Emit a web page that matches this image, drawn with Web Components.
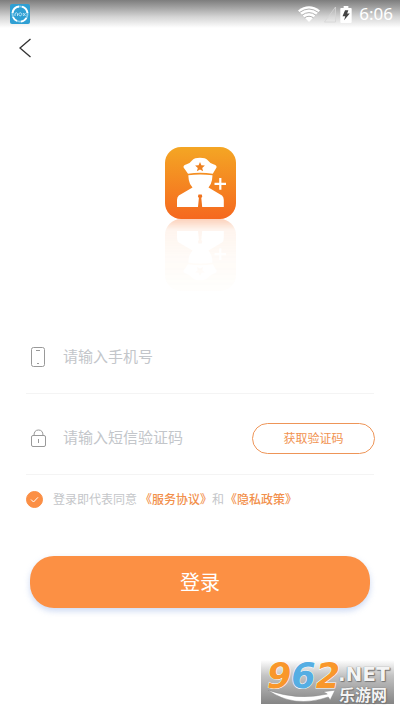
<!DOCTYPE html>
<html lang="zh-CN">
<head>
<meta charset="utf-8">
<meta name="viewport" content="width=device-width, initial-scale=1">
<title>登录</title>
<style>
  body { margin: 0; background: #fff; font-family: "Noto Sans CJK SC", sans-serif; }
</style>
</head>
<body>
<login-page></login-page>

<script>
const define = (name, html, setup) => customElements.define(name, class extends HTMLElement {
  constructor() {
    super();
    const t = document.createElement('template');
    t.innerHTML = html;
    this.attachShadow({ mode: 'open' }).append(t.content.cloneNode(true));
    if (setup) setup(this, this.shadowRoot);
  }
});

define('status-bar', `
<style>
  :host { display: flex; align-items: center; box-sizing: border-box; height: 28px; padding: 0 7px 0 10px;
    background: linear-gradient(#7d7d7d, #a0a0a0 25%, #d4d4d4 60%, #fff); color: #fff;
    font: 17px/28px "Noto Sans", sans-serif; }
  .right { margin-left: auto; display: flex; align-items: center; gap: 4px; }
  time { padding-left: 3px; }
  svg { display: block; }
</style>
<svg width="20" height="20" viewBox="0 0 20 20" role="img" aria-label="nox">
  <rect width="20" height="20" rx="2" fill="#2f9fd3"/>
  <circle cx="10" cy="10" r="7.6" fill="none" stroke="#86cdec" stroke-width="1.8"/>
  <path d="M2.5 9A7.6 7.6 0 0 1 9 2.5M12 2.7A7.6 7.6 0 0 1 17.5 9M16.5 13.9A7.6 7.6 0 0 1 11 17.6M7 17A7.6 7.6 0 0 1 3 13" fill="none" stroke="#fff" stroke-width="1.8"/>
  <path d="M5 12V9.5Q6.6 8 7.5 9.5V12M10.3 8.8a1.5 1.5 0 1 0 .01 0M13 9l2.5 3M15.5 9L13 12" fill="none" stroke="#c5e9f8" stroke-width=".9"/>
</svg>
<div class="right">
  <svg width="22" height="16" viewBox="0 0 22 16">
    <path d="M0 4.500Q11-3.800 22 4.500L11 16Z" fill="#fff"/>
    <path d="M1.500 6.500Q11-.5 20.500 6.500M4 9.200Q11 4 18 9.200M6.500 11.800Q11 8.700 15.500 11.800" fill="none" stroke="#b0b0b0" stroke-width="1"/>
  </svg>
  <svg width="12" height="17" viewBox="0 0 12 17"><path d="M.5 16L11.500 1V16Z" fill="#fff" fill-opacity=".1" stroke="#d4d4d4" stroke-width=".8"/></svg>
  <svg width="12" height="17" viewBox="0 0 12 18">
    <path d="M3.500 0H8.500V2H11Q12 2 12 3V17Q12 18 11 18H1Q0 18 0 17V3Q0 2 1 2H3.500Z" fill="#fff"/>
    <path d="M5 4.500H8.500L7.200 8H10L4 15L5.200 10.800H2.300Z" fill="#444"/>
  </svg>
  <time>6:06</time>
</div>`);

define('back-button', `
<style>
  :host { display: block; padding: 8px 12px; }
  button { display: grid; place-items: center; width: 26px; height: 24px; padding: 0; border: 0; background: none; }
</style>
<button type="button" aria-label="返回">
  <svg width="14" height="20" viewBox="0 0 14 20"><path d="M12.500 1L2 10L12.500 19" fill="none" stroke="#333" stroke-width="1.300"/></svg>
</button>`);

define('app-logo', `
<style>
  :host { display: flex; flex-direction: column; align-items: center; padding-top: 79px; }
  svg { display: block; }
  .mirror { transform: scaleY(-1); opacity: .3;
    -webkit-mask-image: linear-gradient(rgba(0,0,0,.04), rgba(0,0,0,.12) 50%, rgba(0,0,0,.25) 85%, #000);
    mask-image: linear-gradient(rgba(0,0,0,.04), rgba(0,0,0,.12) 50%, rgba(0,0,0,.25) 85%, #000); }
</style>
<div class="main"></div><div class="mirror" aria-hidden="true"></div>`, (host, root) => {
  const art = `<svg width="72" height="72" viewBox="0 0 72 72">
    <defs><linearGradient id="g" x1="0" y1="0" x2="0" y2="1"><stop offset="0" stop-color="#f4a624"/><stop offset="1" stop-color="#f5681f"/></linearGradient></defs>
    <rect x="1" width="71" height="72" rx="16" fill="url(#g)"/>
    <g fill="#fff">
      <path d="M19.600 20.500Q19 18.500 22 17.500Q26.500 16 28.500 13Q30.500 10.700 36 10.700Q41.500 10.700 43.500 13Q45.500 16 50 17.500Q53 18.500 52.500 20.500L48.800 26.800Q36 24.800 24 26.800Z"/>
      <path d="M24.300 28.300Q36 26.800 48.500 28.300L48 33Q47.500 36.500 44.500 40.500L58 48.500Q59.800 50 59.800 53V60H13V53Q13 50 14.800 48.500L28.500 40.500Q25.200 36.500 24.800 33Z"/>
      <path d="M55.200 31H57.400V35.800H62V38H57.400V42.800H55.200V38H50.500V35.800H55.200Z"/>
    </g>
    <path d="M36 15L37.400 18.300L40.900 18.600L38.200 20.900L39.100 24.300L36 22.500L32.900 24.300L33.800 20.900L31.100 18.600L34.600 18.300Z" fill="#ee8120"/>
    <path d="M34.500 47.500H37.700L38.300 49.500L37.300 51L38.200 60H34L34.900 51L33.900 49.500Z" fill="#f0741f"/>
  </svg>`;
  root.querySelector('.main').innerHTML = art;
  root.querySelector('.mirror').innerHTML = art;
});

define('form-field', `
<style>
  :host { display: flex; align-items: center; height: 72px; border-bottom: 1px solid #f4f4f4; }
  label { flex: none; width: 24px; display: grid; place-items: center; }
  input { flex: 1; min-width: 0; margin: 0 8px 2px 13px; padding: 0; border: 0; outline: 0; background: none;
    font: 15px/24px "Noto Sans CJK SC", sans-serif; color: #333; }
  input::placeholder { color: #c3c6ca; opacity: 1; }
</style>
<label for="f"><slot name="icon"></slot></label>
<input id="f">
<slot></slot>`, (host, root) => {
  const i = root.querySelector('input');
  i.placeholder = host.getAttribute('placeholder');
  i.setAttribute('aria-label', i.placeholder);
  i.inputMode = 'numeric';
});

define('code-button', `
<style>
  :host { display: block; margin-right: -1px; }
  button { display: block; box-sizing: border-box; width: 123px; height: 31px; padding: 0; border: 1px solid #ee9558; border-radius: 16px;
    background: #fff; color: #f1924f; font: 12px/28px "Noto Sans CJK SC", sans-serif; }
</style>
<button type="button"><slot></slot></button>`);

define('terms-check', `
<style>
  :host { display: flex; align-items: center; gap: 10px; padding-top: 14px; font-size: 12px; line-height: 20px; color: #c4c6c9; }
  input { appearance: none; flex: none; width: 17px; height: 17px; margin: 0; border: 1px solid #fb8f45; border-radius: 50%; }
  input:checked { background: #fb8f45 url("data:image/svg+xml,%3Csvg xmlns='http://www.w3.org/2000/svg' viewBox='0 0 15 15'%3E%3Cpath d='M4 7.500L6.500 10L11 5.300' fill='none' stroke='white'/%3E%3C/svg%3E"); }
  a { color: #f2904c; font-weight: 500; text-decoration: none; }
  label { margin-right: 3px; }
  .and { margin-right: 1px; }
  div { display: flex; white-space: nowrap; }
</style>
<input type="checkbox" id="c" checked>
<div><label for="c">登录即代表同意</label><a href="#service">《服务协议》</a><span class="and">和</span><a href="#privacy">《隐私政策》</a></div>`);

define('login-button', `
<style>
  :host { display: block; margin: 47px 4px 0; }
  button { display: block; width: 100%; height: 52px; padding: 0; border: 0; border-radius: 24px; background: #fc9044;
    box-shadow: 0 3px 6px rgba(130,160,225,.4); color: #fff; font: 20px/52px "Noto Sans CJK SC", sans-serif; }
</style>
<button type="submit"><slot></slot></button>`);

define('site-mark', `
<style>
  :host { display: block; margin: auto 6px 6px auto; width: 133px; height: 44px;
    background: linear-gradient(#fff, #c4c4c4 35%, #858585); color: #fff; }
  .wrap { display: grid; grid-template-columns: 77px 1fr; }
  .left { padding-left: 6px; }
  .num { font: italic bold 35px/32px "DejaVu Sans", sans-serif; color: #f9972b; height: 30px; -webkit-text-stroke: 1px #fff; paint-order: stroke fill; white-space: nowrap; }
  .num b { color: #55aee3; }
  .net { font: bold 20px/20px "DejaVu Sans", sans-serif; padding-top: 4px; height: 20px; }
  .cn { font: bold 16px/20px "Liberation Sans", "Noto Sans CJK SC", sans-serif; padding: 2px 0 0 1px; height: 18px; }
  .net, .cn { text-shadow: 0 0 1px #555, 1px 1px 1px #777; white-space: nowrap; color: #f4f4f4; }
  svg { display: block; }
</style>
<div class="wrap">
  <div class="left"><div class="num">9<b>6</b>2</div>
    <svg width="70" height="13" viewBox="0 0 72 13"><path d="M1 0Q32 11 62 4L58 1.500L70 0L65 10L63 7Q28 19 1 0Z" fill="#fff" stroke="#888" stroke-width=".5"/></svg></div>
  <div><div class="net">.NET</div><div class="cn">乐游网</div></div>
</div>`);

define('login-page', `
<style>
  :host { display: flex; flex-direction: column; min-height: 100vh; }
  form { padding: 30px 26px 0; }
  form-field + form-field { margin-top: 8px; }
  svg { display: block; }
</style>
<status-bar></status-bar>
<back-button></back-button>
<app-logo></app-logo>
<form>
  <form-field placeholder="请输入手机号">
    <svg slot="icon" width="14" height="20" viewBox="0 0 14 20" fill="none" stroke="#999"><rect x=".5" y=".5" width="13" height="19" rx="2"/><path d="M5 3.500H9M6 16.500H8"/></svg>
  </form-field>
  <form-field placeholder="请输入短信验证码">
    <svg slot="icon" width="15" height="18" viewBox="0 0 15 18" fill="none" stroke="#999"><rect x=".5" y="6.500" width="14" height="11" rx="1.500"/><path d="M3 6.500Q3 1 7.500 1T12 6.500M7.500 10V14"/></svg>
    <code-button>获取验证码</code-button>
  </form-field>
  <terms-check></terms-check>
  <login-button>登录</login-button>
</form>
<site-mark></site-mark>`);
</script>
</body>
</html>
